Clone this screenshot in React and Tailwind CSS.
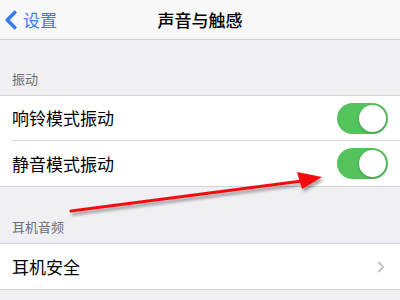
import { ChevronLeft, ChevronRight } from 'lucide-react';

const font = { fontFamily: '"Noto Sans CJK SC", "Noto Sans", sans-serif' };

function Toggle() {
  return (
    <div className="w-[51px] h-[31px] rounded-full bg-[#55c35c] flex items-center justify-end pr-[2px]">
      <div className="w-[27px] h-[27px] rounded-full bg-white shadow-[0_1px_3px_rgba(0,0,0,0.25)]" />
    </div>
  );
}

function Row({ label, last, children }) {
  return (
    <div className="flex h-[45px] items-center pl-3 bg-white">
      <div className={'flex flex-1 h-full items-center justify-between pr-3 ' + (last ? '' : 'border-b border-[#d9d9dd]')}>
        <span className="text-[17px] text-black">{label}</span>
        {children}
      </div>
    </div>
  );
}

export default function App() {
  return (
    <div className="relative w-[400px] h-[300px] overflow-hidden bg-[#efeff4]" style={font}>
      {/* nav bar */}
      <div className="relative flex h-[40px] items-center bg-[#f8f8f9] border-b border-[#cfcfd3]">
        <div className="flex items-center text-[#3a7cf0]">
          <ChevronLeft size={30} strokeWidth={3} className="-ml-[4px]" />
          <span className="text-[17px] -ml-[3px]">设置</span>
        </div>
        <div className="absolute inset-0 flex items-center justify-center text-[17px] font-medium text-black">
          声音与触感
        </div>
      </div>

      {/* vibration */}
      <div className="h-[55px] flex items-end px-3 pb-[7px] text-[13px] text-[#6d6d72]">振动</div>
      <div className="border-y border-[#d4d4d8]">
        <Row label="响铃模式振动"><Toggle /></Row>
        <Row label="静音模式振动" last><Toggle /></Row>
      </div>

      {/* headphones */}
      <div className="h-[56px] flex items-end px-3 pb-[7px] text-[13px] text-[#6d6d72]">耳机音频</div>
      <div className="border-y border-[#d4d4d8]">
        <Row label="耳机安全" last>
          <ChevronRight size={18} strokeWidth={2.5} className="text-[#c4c4c8] -mr-[2px]" />
        </Row>
      </div>

      {/* red annotation arrow */}
      <svg className="absolute left-0 top-0" width="400" height="300" viewBox="0 0 400 300">
        <defs>
          <filter id="sh" x="-10%" y="-50%" width="120%" height="200%">
            <feDropShadow dx="2" dy="3" stdDeviation="1.5" floodColor="#000" floodOpacity="0.35" />
          </filter>
        </defs>
        <g filter="url(#sh)">
          <line x1="71" y1="211" x2="302" y2="181" stroke="#f20d0d" strokeWidth="3" strokeLinecap="round" />
          <polygon points="322,177 297,172 302,189" fill="#f20d0d" />
        </g>
      </svg>
    </div>
  );
}
